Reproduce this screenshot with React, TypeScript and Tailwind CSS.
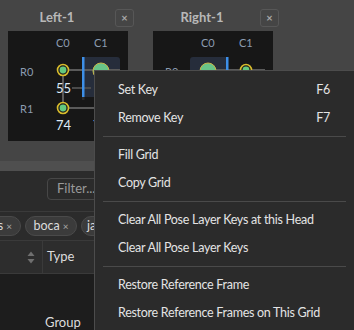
import { Fragment } from "react";

const menu: ({ label: string; key?: string } | null)[] = [
  { label: "Set Key", key: "F6" },
  { label: "Remove Key", key: "F7" },
  null,
  { label: "Fill Grid" },
  { label: "Copy Grid" },
  null,
  { label: "Clear All Pose Layer Keys at this Head" },
  { label: "Clear All Pose Layer Keys" },
  null,
  { label: "Restore Reference Frame" },
  { label: "Restore Reference Frames on This Grid" },
];

function Node({ x, y }: { x: number; y: number }) {
  return (
    <g>
      <circle cx={x} cy={y} r={5.5} fill="#1c1c1c" stroke="#d9bd2c" strokeWidth={1.6} />
      <circle cx={x} cy={y} r={3.4} fill="#63c97f" />
    </g>
  );
}

function GridPanel({ side }: { side: "left" | "right" }) {
  // highlighted column: left card -> C1 (bar on left), right card -> C0 (bar on right)
  const hx = side === "left" ? 74 : 37;
  const barX = side === "left" ? 74 : 73;
  const bigX = side === "left" ? 93 : 55;
  const nodeX = side === "left" ? 55 : 93;
  return (
    <div className="relative w-[120px] h-[110px] bg-[#171717]">
      <svg className="absolute inset-0" width={120} height={110}>
        <rect x={hx} y={26} width={38} height={40} rx={3} fill="#262d3b" />
        <line x1={55} y1={39} x2={112} y2={39} stroke="#5a5a5a" strokeWidth={2} />
        <line x1={55} y1={77} x2={112} y2={77} stroke="#5a5a5a" strokeWidth={2} />
        <line x1={55} y1={39} x2={55} y2={77} stroke="#5a5a5a" strokeWidth={2} />
        <line x1={64} y1={57} x2={83} y2={57} stroke="#4a4a4a" strokeWidth={2} />
        <rect x={barX} y={26} width={2.5} height={40} fill="#3d8fe8" />
        <rect x={barX} y={66} width={2.5} height={3} fill="#2a2a2a" />
        <circle cx={bigX} cy={40} r={8} fill="#68c488" stroke="#c9b448" strokeWidth={1} />
        <Node x={nodeX} y={39} />
        <Node x={55} y={77} />
      </svg>
      <span className="absolute left-[48px] top-[4px] text-[11px] text-[#8c9cb0]">C0</span>
      <span className="absolute left-[86px] top-[4px] text-[11px] text-[#8c9cb0]">C1</span>
      <span className="absolute left-[12px] top-[33px] text-[11px] text-[#8c9cb0]">R0</span>
      <span className="absolute left-[12px] top-[70px] text-[11px] text-[#8c9cb0]">R1</span>
      <span className="absolute left-[48px] top-[48px] text-[13px] text-[#dfeaf6]">55</span>
      <span className="absolute left-[48px] top-[85px] text-[13px] text-[#dfeaf6]">74</span>
      <span className="absolute left-[85px] top-[85px] text-[13px] text-[#dfeaf6]">74</span>
    </div>
  );
}

function Card({ title, side }: { title: string; side: "left" | "right" }) {
  return (
    <div className="w-[126px] flex flex-col">
      <div className="h-[18px] flex items-center">
        <div className="w-[98px] text-center text-[13px] font-bold text-[#b8b8b8]">{title}</div>
        <div className="ml-[9px] w-[19px] h-[18px] rounded-[3px] border border-[#575757] flex items-center justify-center text-[11px] font-bold text-[#a8a8a8]">
          ×
        </div>
      </div>
      <div className="mt-[4px]">
        <GridPanel side={side} />
      </div>
    </div>
  );
}

export default function App() {
  return (
    <div
      className="relative w-[354px] h-[330px] overflow-hidden flex flex-col bg-[#2b2b2b]"
      style={{ fontFamily: '"Segoe UI", Lato, "Noto Sans", sans-serif' }}
    >
      {/* Top: grid cards */}
      <div className="h-[161px] shrink-0 bg-[#454545] flex gap-[19px] pl-[8px] pt-[9px]">
        <Card title="Left-1" side="left" />
        <Card title="Right-1" side="right" />
      </div>
      <div className="h-[10px] shrink-0 bg-[#4f4f4f]" />

      {/* Bottom: filter, tags, table */}
      <div className="flex-1 flex flex-col">
        <div className="h-[40px] shrink-0 pt-[7px] pl-[47px]">
          <div className="w-[140px] h-[22px] rounded-[4px] border border-[#474747] flex items-center pl-[9px] text-[13px] text-[#9a9a9a]">
            Filter...
          </div>
        </div>
        <div className="h-[29px] shrink-0 border-t border-[#3a3a3a] flex items-center gap-[4px] overflow-hidden whitespace-nowrap">
          <div className="-ml-[19px] w-[40px] h-[20px] rounded-full bg-[#3b3b3b] border border-[#4a4a4a] flex items-center justify-end pr-[8px] text-[12.5px] text-[#dcdcdc]">
            s <span className="ml-[3px] text-[10px] text-[#a8a8a8]">×</span>
          </div>
          <div className="w-[52px] h-[20px] rounded-full bg-[#3b3b3b] border border-[#4a4a4a] flex items-center justify-center text-[12.5px] text-[#dcdcdc]">
            boca <span className="ml-[3px] text-[10px] text-[#a8a8a8]">×</span>
          </div>
          <div className="w-[50px] h-[20px] rounded-full bg-[#3b3b3b] border border-[#4a4a4a] flex items-center pl-[5px] text-[12.5px] text-[#dcdcdc]">
            ja
          </div>
        </div>
        <div className="h-[34px] shrink-0 border-y border-[#3a3a3a] bg-[#2d2d2d] flex">
          <div className="w-[42px] flex items-center justify-end pr-[7px]">
            <svg width={8} height={13} viewBox="0 0 8 13">
              <path d="M4 0.5 L7.5 5 L0.5 5 Z" fill="#6f6f6f" />
              <path d="M4 12.5 L7.5 8 L0.5 8 Z" fill="#6f6f6f" />
            </svg>
          </div>
          <div className="w-px bg-[#3a3a3a]" />
          <div className="flex items-center pl-[4px] text-[13px] text-[#dcdcdc]">Type</div>
        </div>
        <div className="flex-1 bg-[#1d1d1d] relative">
          <span className="absolute left-[45px] top-[39px] text-[13px] text-[#dcdcdc]">Group</span>
        </div>
      </div>

      {/* Context menu */}
      <div className="absolute left-[94px] top-[70px] w-[261px] h-[270px] bg-[#2b2b2b] border border-[#4c4c4c] pt-[5px] text-[12.5px] tracking-[-0.28px] text-[#e4e4e4] whitespace-nowrap">
        {menu.map((item, i) =>
          item ? (
            <div key={i} className="h-[28px] flex items-center justify-between pl-[23px] pr-[24px]">
              <span>{item.label}</span>
              {item.key && <span>{item.key}</span>}
            </div>
          ) : (
            <Fragment key={i}>
              <div className="h-[9px] flex items-center px-[8px]">
                <div className="h-px w-full bg-[#4a4a4a]" />
              </div>
            </Fragment>
          )
        )}
      </div>
    </div>
  );
}
